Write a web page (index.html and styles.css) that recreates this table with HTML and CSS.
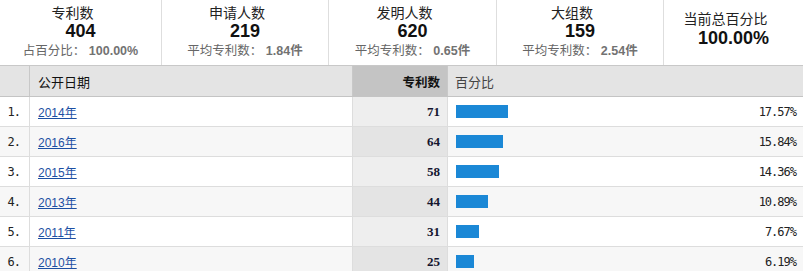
FILE: index.html
```html
<!DOCTYPE html>
<html lang="zh-CN">
<head>
<meta charset="utf-8">
<title>专利统计</title>
<link rel="stylesheet" href="styles.css">
</head>
<body>
<div class="summary">
  <div class="stat">
    <div class="stat-label">专利数</div>
    <div class="stat-value">404</div>
    <div class="stat-sub">占百分比： <b>100.00%</b></div>
  </div>
  <div class="stat">
    <div class="stat-label">申请人数</div>
    <div class="stat-value">219</div>
    <div class="stat-sub">平均专利数： <b>1.84件</b></div>
  </div>
  <div class="stat">
    <div class="stat-label">发明人数</div>
    <div class="stat-value">620</div>
    <div class="stat-sub">平均专利数： <b>0.65件</b></div>
  </div>
  <div class="stat">
    <div class="stat-label">大组数</div>
    <div class="stat-value">159</div>
    <div class="stat-sub">平均专利数： <b>2.54件</b></div>
  </div>
  <div class="stat stat-total">
    <div class="stat-label">当前总百分比</div>
    <div class="stat-value">100.00%</div>
  </div>
</div>

<div class="grid">
  <div class="row head">
    <div class="c idx"></div>
    <div class="c date">公开日期</div>
    <div class="c count">专利数</div>
    <div class="c pct">百分比</div>
  </div>
  <div class="row">
    <div class="c idx">1.</div>
    <div class="c date"><a href="#">2014年</a></div>
    <div class="c count">71</div>
    <div class="c pct"><span class="bar" style="width:52px"></span><span class="pv">17.57%</span></div>
  </div>
  <div class="row alt">
    <div class="c idx">2.</div>
    <div class="c date"><a href="#">2016年</a></div>
    <div class="c count">64</div>
    <div class="c pct"><span class="bar" style="width:47px"></span><span class="pv">15.84%</span></div>
  </div>
  <div class="row">
    <div class="c idx">3.</div>
    <div class="c date"><a href="#">2015年</a></div>
    <div class="c count">58</div>
    <div class="c pct"><span class="bar" style="width:43px"></span><span class="pv">14.36%</span></div>
  </div>
  <div class="row alt">
    <div class="c idx">4.</div>
    <div class="c date"><a href="#">2013年</a></div>
    <div class="c count">44</div>
    <div class="c pct"><span class="bar" style="width:32px"></span><span class="pv">10.89%</span></div>
  </div>
  <div class="row">
    <div class="c idx">5.</div>
    <div class="c date"><a href="#">2011年</a></div>
    <div class="c count">31</div>
    <div class="c pct"><span class="bar" style="width:23px"></span><span class="pv">7.67%</span></div>
  </div>
  <div class="row alt">
    <div class="c idx">6.</div>
    <div class="c date"><a href="#">2010年</a></div>
    <div class="c count">25</div>
    <div class="c pct"><span class="bar" style="width:18px"></span><span class="pv">6.19%</span></div>
  </div>
</div>
</body>
</html>
```

FILE: styles.css
```css
* { box-sizing: border-box; }
html, body { margin: 0; padding: 0; background: #fff; }
body {
  width: 803px;
  font-family: "Liberation Sans", "Noto Sans CJK SC", sans-serif;
  color: #222;
  overflow: hidden;
}

.summary {
  display: grid;
  grid-template-columns: 162px 167px 168px 167px 1fr;
  height: 66px;
  border-bottom: 1px solid #c8c8c8;
}
.stat {
  border-right: 1px solid #dedede;
  text-align: center;
  padding-top: 5px;
}
.stat-total { border-right: none; padding-top: 11px; }
.stat-label {
  font-size: 14px;
  line-height: 17px;
  color: #222;
  padding-right: 16px;
}
.stat-value {
  font-size: 18px;
  line-height: 19px;
  font-weight: bold;
  color: #111;
}
.stat-total .stat-value { line-height: 20px; }
.stat-sub {
  font-size: 12.5px;
  line-height: 20px;
  color: #666;
}
.stat-sub b { color: #727272; }

.row {
  display: grid;
  grid-template-columns: 30px 323px 95px 1fr;
  height: 30px;
  border-bottom: 1px solid #dddddd;
  background: #fff;
}
.row.alt { background: #f7f7f7; }
.c {
  display: flex;
  align-items: center;
  border-right: 1px solid #dddddd;
  font-size: 12px;
}
.c.pct { border-right: none; }

.row.head {
  height: 31px;
  background: #e4e4e4;
  border-bottom: 1px solid #c4c4c4;
}
.row.head .c { border-right-color: #c8c8c8; }
.row.head .date { padding-left: 8px; font-size: 13px; color: #111; }
.row.head .count {
  background: #c4c4c4;
  font-family: "Liberation Sans", "Noto Sans CJK SC", sans-serif;
  font-weight: bold;
  color: #111;
  font-size: 12.5px;
  letter-spacing: 0;
}
.row.head .pct { padding-left: 7px; color: #444; font-size: 13px; }

.idx {
  justify-content: flex-end;
  padding-right: 9px;
  font-family: "DejaVu Sans Mono", monospace;
  font-size: 12px;
  letter-spacing: -1px;
  color: #222;
}
.date { padding-left: 8px; }
.date a {
  color: #1c4fa3;
  text-decoration: underline;
  font-size: 12px;
}
.count {
  justify-content: flex-end;
  padding-right: 7px;
  background: #eeeeee;
  font-family: "Liberation Serif", serif;
  font-weight: bold;
  font-size: 13px;
  color: #14142e;
}
.row.alt .count { background: #e4e4e4; }
.pct { padding-left: 8px; padding-right: 7px; }
.bar {
  display: block;
  height: 13px;
  background: #1b88d6;
}
.pv {
  margin-left: auto;
  font-family: "DejaVu Sans Mono", monospace;
  font-size: 12px;
  letter-spacing: -1px;
  color: #222;
}
```
